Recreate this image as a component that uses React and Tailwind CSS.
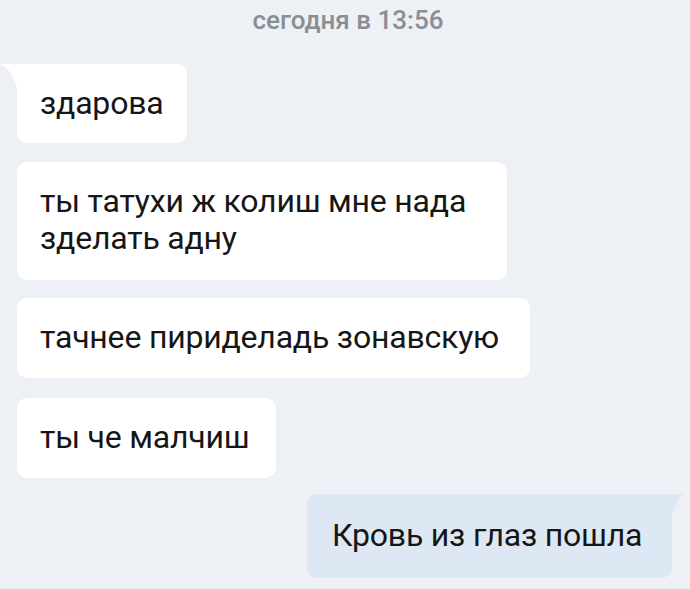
import React from "react";

const font = { fontFamily: "Roboto, 'Noto Sans', sans-serif" };

function In({ children, className = "", tail = false }) {
  return (
    <div className={`relative ml-[17px] bg-white rounded-[10px] ${tail ? "rounded-tl-none" : ""} px-[23px] py-[21px] text-[32px] leading-[37px] tracking-[-0.2px] text-[#161616] ${className}`}>
      {tail && (
        <svg className="absolute left-[-17px] top-0" width="18" height="30" viewBox="0 0 18 30">
          <path d="M0 0 H18 V30 C16 14 9 4 0 0 Z" fill="#ffffff" />
        </svg>
      )}
      {children}
    </div>
  );
}

export default function App() {
  return (
    <div className="w-[690px] h-[589px] bg-[#edf0f4] overflow-hidden" style={font}>
      <div className="flex flex-col items-start pt-[4px]">
        <div className="self-center text-[26px] leading-[32px] font-medium text-[#8a8e94] pl-[6px]">сегодня в 13:56</div>
        <In tail className="mt-[28px] w-[170px] h-[79px]">здарова</In>
        <In className="mt-[19px] w-[490px] h-[118px]">
          ты татухи ж колиш мне нада
          <br />
          зделать адну
        </In>
        <In className="mt-[18px] w-[513px] h-[80px]">тачнее пириделадь зонавскую</In>
        <In className="mt-[20px] w-[259px] h-[80px]">ты че малчиш</In>
        <div className="relative self-end mr-[18px] mt-[16px] w-[365px] h-[84px] bg-[#dde8f4] rounded-[10px] rounded-tr-none pl-[25px] py-[23px] text-[32px] leading-[37px] tracking-[-0.2px] text-[#161616] whitespace-nowrap">
          <svg className="absolute right-[-11px] top-0" width="12" height="28" viewBox="0 0 12 28">
            <path d="M0 0 H12 C7 5 2 14 0 28 Z" fill="#dde8f4" />
          </svg>
          Кровь из глаз пошла
        </div>
      </div>
    </div>
  );
}
